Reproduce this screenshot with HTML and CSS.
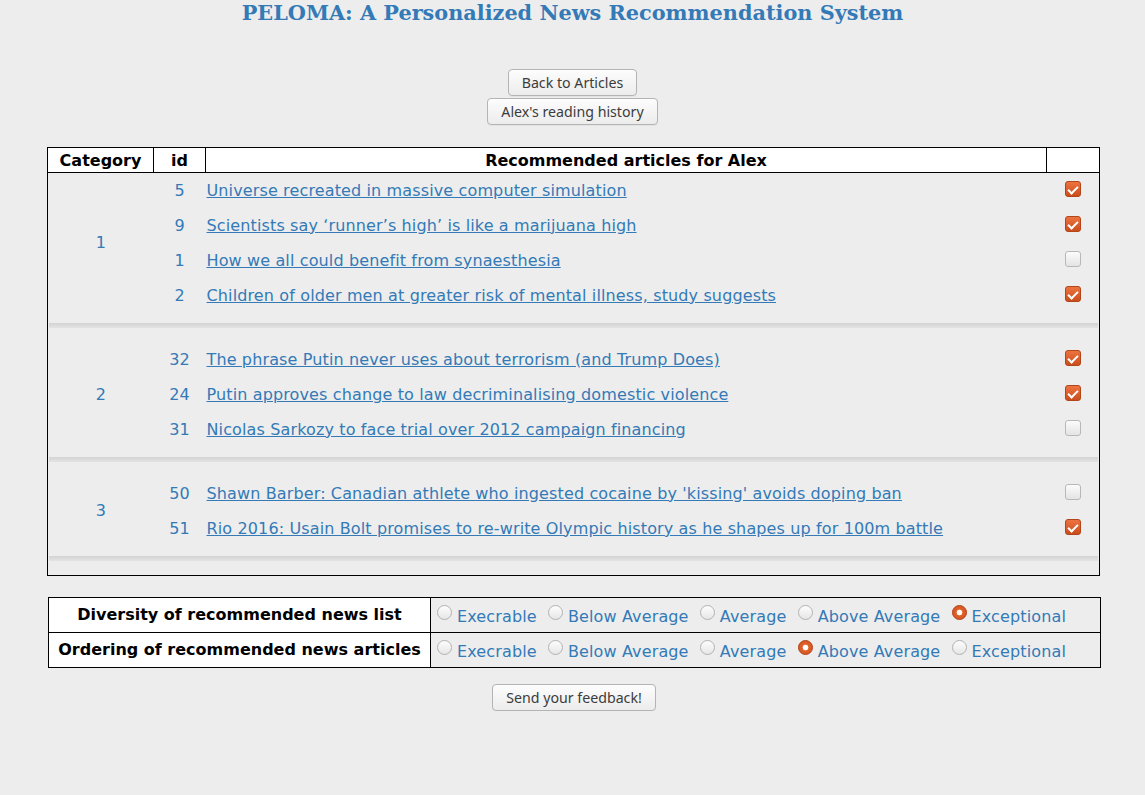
FILE: index.html
```html
<!DOCTYPE html>
<html lang="en">
<head>
<meta charset="utf-8">
<title>PELOMA</title>
<link rel="stylesheet" href="styles.css">
</head>
<body>
<h1 class="title">PELOMA: A Personalized News Recommendation System</h1>

<div class="actions">
  <button class="btn" type="button">Back to Articles</button>
  <button class="btn" type="button">Alex's reading history</button>
</div>

<table class="recs">
  <colgroup>
    <col class="c-cat"><col class="c-id"><col><col class="c-chk">
  </colgroup>
  <thead>
    <tr><th>Category</th><th>id</th><th>Recommended articles for Alex</th><th></th></tr>
  </thead>
  <tbody>
    <tr class="item"><td class="cat" rowspan="4">1</td><td class="id">5</td><td class="art"><a href="#">Universe recreated in massive computer simulation</a></td><td class="chkc"><input class="chk" type="checkbox" checked></td></tr>
    <tr class="item"><td class="id">9</td><td class="art"><a href="#">Scientists say ‘runner’s high’ is like a marijuana high</a></td><td class="chkc"><input class="chk" type="checkbox" checked></td></tr>
    <tr class="item"><td class="id">1</td><td class="art"><a href="#">How we all could benefit from synaesthesia</a></td><td class="chkc"><input class="chk" type="checkbox"></td></tr>
    <tr class="item"><td class="id">2</td><td class="art"><a href="#">Children of older men at greater risk of mental illness, study suggests</a></td><td class="chkc"><input class="chk" type="checkbox" checked></td></tr>
    <tr class="sep"><td colspan="4"><hr></td></tr>

    <tr class="item"><td class="cat" rowspan="3">2</td><td class="id">32</td><td class="art"><a href="#">The phrase Putin never uses about terrorism (and Trump Does)</a></td><td class="chkc"><input class="chk" type="checkbox" checked></td></tr>
    <tr class="item"><td class="id">24</td><td class="art"><a href="#">Putin approves change to law decriminalising domestic violence</a></td><td class="chkc"><input class="chk" type="checkbox" checked></td></tr>
    <tr class="item"><td class="id">31</td><td class="art"><a href="#">Nicolas Sarkozy to face trial over 2012 campaign financing</a></td><td class="chkc"><input class="chk" type="checkbox"></td></tr>
    <tr class="sep"><td colspan="4"><hr></td></tr>

    <tr class="item"><td class="cat" rowspan="2">3</td><td class="id">50</td><td class="art"><a href="#">Shawn Barber: Canadian athlete who ingested cocaine by 'kissing' avoids doping ban</a></td><td class="chkc"><input class="chk" type="checkbox"></td></tr>
    <tr class="item"><td class="id">51</td><td class="art"><a href="#">Rio 2016: Usain Bolt promises to re-write Olympic history as he shapes up for 100m battle</a></td><td class="chkc"><input class="chk" type="checkbox" checked></td></tr>
    <tr class="sep"><td colspan="4"><hr></td></tr>
  </tbody>
</table>

<table class="rating">
  <tr>
    <th>Diversity of recommended news list</th>
    <td>
      <label><input class="rad" type="radio" name="div">Execrable</label>
      <label><input class="rad" type="radio" name="div">Below Average</label>
      <label><input class="rad" type="radio" name="div">Average</label>
      <label><input class="rad" type="radio" name="div">Above Average</label>
      <label><input class="rad" type="radio" name="div" checked>Exceptional</label>
    </td>
  </tr>
  <tr>
    <th>Ordering of recommended news articles</th>
    <td>
      <label><input class="rad" type="radio" name="ord">Execrable</label>
      <label><input class="rad" type="radio" name="ord">Below Average</label>
      <label><input class="rad" type="radio" name="ord">Average</label>
      <label><input class="rad" type="radio" name="ord" checked>Above Average</label>
      <label><input class="rad" type="radio" name="ord">Exceptional</label>
    </td>
  </tr>
</table>

<div class="actions send">
  <button class="btn" type="button">Send your feedback!</button>
</div>
</body>
</html>
```

FILE: styles.css
```css
html, body {
  margin: 0;
  padding: 0;
  background: #ededed;
}

body {
  font-family: "DejaVu Sans", Verdana, sans-serif;
  font-size: 16px;
  color: #000;
}

.title {
  margin: 0;
  text-align: center;
  font-family: "DejaVu Serif", Georgia, serif;
  font-weight: bold;
  font-size: 20.8px;
  line-height: 26px;
  color: #337ab7;
}

.actions {
  display: flex;
  flex-direction: column;
  align-items: center;
  gap: 2px;
  margin-top: 43px;
}

.actions.send {
  margin-top: 16px;
  padding-left: 3px;
}

.btn {
  height: 27px;
  padding: 0 13px;
  font-family: "Noto Sans", "Open Sans", sans-serif;
  font-size: 14.2px;
  color: #3c3c3c;
  background: linear-gradient(#fdfdfd, #ececec);
  border: 1px solid #b4b4b4;
  border-radius: 4px;
  box-shadow: 0 1px 0 rgba(0,0,0,0.04);
}

a {
  color: #337ab7;
  text-decoration: underline;
}

.recs {
  margin: 22px 0 0 47px;
  width: 1053px;
  border-collapse: collapse;
  border: 1px solid #000;
  table-layout: fixed;
}

.c-cat { width: 106px; }
.c-id { width: 52px; }
.c-chk { width: 53px; }

.recs th {
  background: #fff;
  border: 1px solid #000;
  font-weight: bold;
  font-size: 16px;
  padding: 2.5px 2px 2px;
  line-height: normal;
  text-align: center;
}

.recs td {
  padding: 8px 1px;
  line-height: normal;
  vertical-align: middle;
  color: #337ab7;
}

.recs td.cat,
.recs td.id,
.recs td.chkc {
  text-align: center;
}

.recs td.art {
  text-align: left;
  padding-left: 1px;
  white-space: nowrap;
  letter-spacing: 0.13px;
}

.recs tr.sep td {
  padding: 10px 1px 14px;
}

.recs hr {
  display: block;
  height: 5px;
  margin: 0;
  border: 0;
  background: linear-gradient(#d3d3d3, #e3e3e3);
}

.chk {
  appearance: none;
  -webkit-appearance: none;
  display: inline-block;
  box-sizing: border-box;
  width: 16px;
  height: 16px;
  margin: 0;
  vertical-align: middle;
  border: 1px solid #b8b8b8;
  border-radius: 3px;
  background: linear-gradient(#fcfcfc, #e4e4e4);
  position: relative;
  top: -2px;
}

.chk:checked {
  border-color: #b2461b;
  background: linear-gradient(#ec7440, #cc4d1c);
}

.chk:checked::after {
  content: "";
  position: absolute;
  left: 4.5px;
  top: 1.5px;
  width: 4px;
  height: 8px;
  border: solid #fff;
  border-width: 0 2.5px 2.5px 0;
  transform: rotate(45deg);
}

.rating {
  margin: 21px 0 0 48px;
  width: 1053px;
  border-collapse: collapse;
  border: 1px solid #000;
}

.rating th {
  width: 381px;
  height: 34px;
  padding: 0;
  background: #fff;
  border: 1px solid #000;
  font-weight: bold;
  font-size: 16px;
  text-align: center;
  vertical-align: middle;
}

.rating td {
  padding: 2px 0 0 6px;
  border: 1px solid #000;
  vertical-align: middle;
  color: #337ab7;
  white-space: nowrap;
  letter-spacing: 0.13px;
}

.rating label {
  margin-right: 6px;
}

.rad {
  appearance: none;
  -webkit-appearance: none;
  display: inline-block;
  box-sizing: border-box;
  width: 15px;
  height: 15px;
  margin: 0 5px 0 0;
  border: 1px solid #b2b2b2;
  border-radius: 50%;
  background: linear-gradient(#fdfdfd, #e6e6e6);
  vertical-align: 2px;
}

.rad:checked {
  border-color: #b2461b;
  background: radial-gradient(circle, #fff 0, #fff 2.5px, #e2622b 3.2px, #cc4d1c 100%);
}
```
